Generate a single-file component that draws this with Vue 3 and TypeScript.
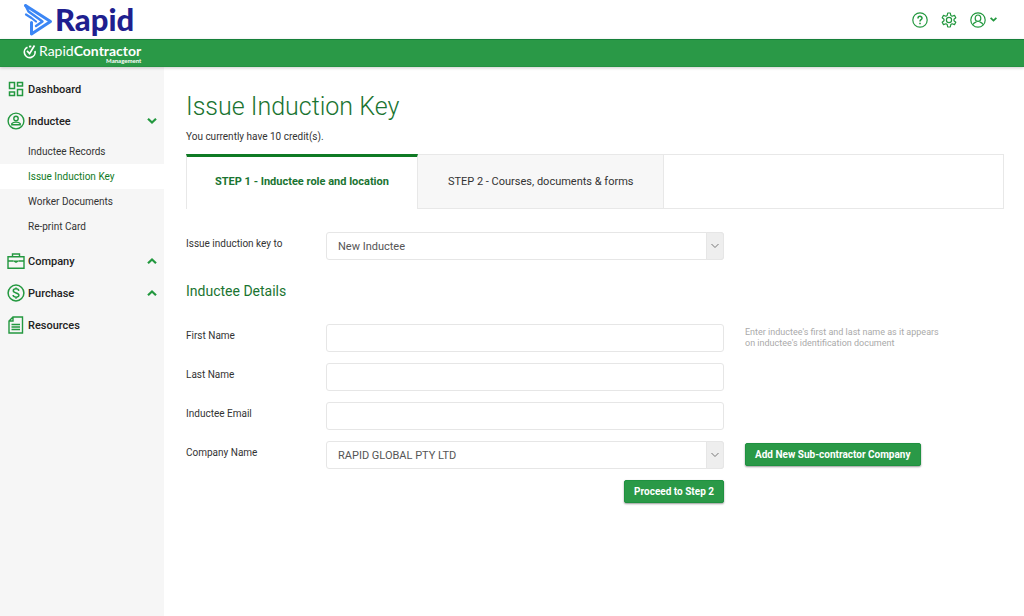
<script setup lang="ts">
import { ref } from 'vue'

interface NavItem {
  label: string
  icon: 'dashboard' | 'person' | 'briefcase' | 'dollar' | 'document'
  expandable?: boolean
  children?: string[]
}

const navItems: NavItem[] = [
  { label: 'Dashboard', icon: 'dashboard' },
  {
    label: 'Inductee',
    icon: 'person',
    expandable: true,
    children: ['Inductee Records', 'Issue Induction Key', 'Worker Documents', 'Re-print Card'],
  },
  { label: 'Company', icon: 'briefcase', expandable: true },
  { label: 'Purchase', icon: 'dollar', expandable: true },
  { label: 'Resources', icon: 'document' },
]
const activePage = 'Issue Induction Key'

const issueTo = ref('New Inductee')
const firstName = ref('')
const lastName = ref('')
const email = ref('')
const company = ref('RAPID GLOBAL PTY LTD')
</script>

<template>
  <div class="page">
    <header class="top">
      <a class="brand" href="#" aria-label="Rapid">
        <svg class="brand-mark" width="30" height="34" viewBox="0 0 30 34" fill="none" stroke="#3b86f5" stroke-width="3" stroke-linejoin="round" stroke-linecap="round">
          <path d="M2.500 2.500 27.500 18.500 8.500 31V19.500" />
          <path d="M2.500 2.500 5.500 8.500 19.500 18.500 13 23" stroke-width="2.400" />
          <path d="M3 11.500 8.500 15 13 18.500" stroke-width="2.200" />
        </svg>
        <span>Rapid</span>
      </a>
      <div class="tools">
        <button class="tool" type="button" aria-label="Help">
          <svg width="16" height="16" viewBox="0 0 16 16" fill="none" stroke="currentColor" stroke-width="1.200">
            <circle cx="8" cy="8" r="7.200" />
            <path d="M6 6.400C6 3.700 10 3.700 10 6.200 10 7.700 8 7.600 8 9.400" stroke-width="1.500" />
            <path d="M8 10.700v1.500" stroke-width="1.600" />
          </svg>
        </button>
        <button class="tool" type="button" aria-label="Settings">
          <svg width="16" height="16" viewBox="0 0 16 16" fill="none" stroke="currentColor" stroke-width="1.200" stroke-linejoin="round">
            <path d="M6.200 3.400 6.700 1h2.600l.5 2.400 1.300.8 2.400-.8 1.300 2.300L13 7.200v1.600l1.800 1.500-1.300 2.300-2.400-.8-1.300.8L9.300 15H6.700l-.5-2.400-1.300-.8-2.400.8-1.300-2.300L3 8.800V7.200L1.200 5.700l1.300-2.300 2.400.8z" />
            <circle cx="8" cy="8" r="2.600" />
          </svg>
        </button>
        <button class="tool account" type="button" aria-label="Account">
          <svg width="16" height="16" viewBox="0 0 16 16" fill="none" stroke="currentColor" stroke-width="1.200">
            <circle cx="8" cy="8" r="7.200" />
            <ellipse cx="8" cy="6.200" rx="2.800" ry="3.200" />
            <path d="M3 12.600C3.500 10.800 5 10.500 6.500 9.800M13 12.600c-.5-1.800-2-2.100-3.500-2.800" />
          </svg>
          <svg width="7" height="5" viewBox="0 0 7 5" fill="none" stroke="currentColor" stroke-width="1.800"><path d="M.6.800 3.500 3.600 6.400.8" /></svg>
        </button>
      </div>
    </header>

    <div class="product">
      <svg width="14" height="16" viewBox="0 0 14 16" fill="none" stroke="#fff" stroke-width="1.700">
        <path d="M4.500 2.200A5.400 5.400 0 1 0 12 6" />
        <path d="M4 5.800 6.600 8.600 11.500 .5" />
        <path d="M6 1.700 8.300 1.300" />
      </svg>
      <div class="product-name">
        <span>Rapid<b>Contractor</b></span>
        <small>Management</small>
      </div>
    </div>

    <div class="body">
      <nav class="side" aria-label="Main">
        <template v-for="item in navItems" :key="item.label">
          <a class="nav-item" href="#">
            <svg v-if="item.icon === 'dashboard'" width="18" height="18" viewBox="0 0 18 18" fill="none" stroke="currentColor" stroke-width="1.500">
              <path d="M2.500 2.500h5v6h-5zM10.500 2.500h5v3.500h-5zM2.500 12h5v3.500h-5zM10.500 9.500h5v6h-5z" />
            </svg>
            <svg v-else-if="item.icon === 'person'" width="18" height="18" viewBox="0 0 18 18" fill="none" stroke="currentColor" stroke-width="1.400">
              <circle cx="9" cy="9" r="7.900" />
              <circle cx="9" cy="6.500" r="2.200" />
              <path d="M4.800 12.800V11.600C6.300 9.600 11.700 9.600 13.200 11.600V12.800z" />
            </svg>
            <svg v-else-if="item.icon === 'briefcase'" width="18" height="18" viewBox="0 0 18 18" fill="none" stroke="currentColor" stroke-width="1.400">
              <path d="M1 4.800h16v11.500H1zM5.500 4.500V2h7v2.500M1 9h5.500M11.500 9H17" />
              <path d="M6.500 8.500h5v1L9 11 6.500 9.500z" fill="currentColor" stroke="none" />
            </svg>
            <svg v-else-if="item.icon === 'dollar'" width="18" height="18" viewBox="0 0 18 18" fill="none" stroke="currentColor" stroke-width="1.500">
              <circle cx="9" cy="9" r="7.900" />
              <path d="M11.800 6.800C11.500 4.200 6.300 4.200 6.300 6.800 6.300 9.500 11.900 8.400 11.900 11.200 11.900 13.900 6.200 13.700 6.100 11M9 3.500v1.600M9 13v1.700" />
            </svg>
            <svg v-else width="18" height="18" viewBox="0 0 18 18" fill="none" stroke="currentColor" stroke-width="1.400">
              <path d="M6 1h9.500v16H2V5zM6 1v4H2M4.500 8.500h8.500M4.500 11h8.500M4.500 13.500h8.500" />
            </svg>
            <span>{{ item.label }}</span>
            <svg v-if="item.expandable" class="caret" width="10" height="8" viewBox="0 0 10 8" fill="none" stroke="currentColor" stroke-width="2.200">
              <path :d="item.children ? 'M1 1.800 5 5.600 9 1.800' : 'M1 6.200 5 2.400 9 6.200'" />
            </svg>
          </a>
          <ul v-if="item.children" class="sub">
            <li v-for="child in item.children" :key="child">
              <a href="#" :class="{ active: child === activePage }">{{ child }}</a>
            </li>
          </ul>
        </template>
      </nav>

      <main class="main">
        <h1>Issue Induction Key</h1>
        <p class="credits">You currently have 10 credit(s).</p>

        <div class="tabs" role="tablist">
          <button class="tab current" type="button" role="tab" aria-selected="true">STEP 1 - Inductee role and location</button>
          <button class="tab" type="button" role="tab" aria-selected="false">STEP 2 - Courses, documents &amp; forms</button>
          <div class="tab-rest"></div>
        </div>

        <form @submit.prevent>
          <div class="row">
            <label for="issue-to">Issue induction key to</label>
            <div class="select">
              <select id="issue-to" v-model="issueTo"><option>New Inductee</option></select>
              <span class="arrow"><svg width="8" height="6" viewBox="0 0 8 6" fill="none" stroke="#777"><path d="M.5 1 4 4.500 7.500 1" /></svg></span>
            </div>
          </div>

          <h2>Inductee Details</h2>

          <div class="row">
            <label for="first">First Name</label>
            <input id="first" v-model="firstName" type="text" aria-describedby="name-help" />
            <p id="name-help" class="help">Enter inductee's first and last name as it appears on inductee's identification document</p>
          </div>
          <div class="row">
            <label for="last">Last Name</label>
            <input id="last" v-model="lastName" type="text" />
          </div>
          <div class="row">
            <label for="email">Inductee Email</label>
            <input id="email" v-model="email" type="email" />
          </div>
          <div class="row">
            <label for="company">Company Name</label>
            <div class="select">
              <select id="company" v-model="company"><option>RAPID GLOBAL PTY LTD</option></select>
              <span class="arrow"><svg width="8" height="6" viewBox="0 0 8 6" fill="none" stroke="#777"><path d="M.5 1 4 4.500 7.500 1" /></svg></span>
            </div>
            <button class="btn add" type="button">Add New Sub-contractor Company</button>
          </div>
          <div class="row">
            <button class="btn proceed" type="submit">Proceed to Step 2</button>
          </div>
        </form>
      </main>
    </div>
  </div>
</template>

<style>
body {
  margin: 0;
  background: #fff;
}
</style>

<style scoped>
.page {
  display: flex;
  flex-direction: column;
  min-height: 100vh;
  font-family: Roboto, "Liberation Sans", sans-serif;
  color: #333;
}
.page * {
  box-sizing: border-box;
}
a {
  color: inherit;
  text-decoration: none;
}
button,
input,
select {
  font-family: inherit;
}
svg {
  flex: none;
}
.top {
  display: flex;
  align-items: center;
  justify-content: space-between;
  height: 39px;
  padding: 0 27px 0 23px;
}
.brand {
  display: flex;
  align-items: center;
  gap: 2px;
  height: 39px;
  color: #1f1f8f;
  font-family: Lato, sans-serif;
  font-size: 31px;
  font-weight: 900;
  line-height: 39px;
}
.tools {
  display: flex;
  gap: 13px;
}
.tool {
  display: flex;
  align-items: center;
  gap: 4px;
  padding: 0;
  border: 0;
  background: none;
  color: #23983f;
}
.product {
  display: flex;
  align-items: center;
  gap: 2px;
  height: 28px;
  padding: 0 23px;
  background: #2a9947;
  border-top: 1px solid #16803a;
  border-bottom: 1px solid #259142;
  box-shadow: 0 1px 3px rgba(0, 0, 0, 0.2);
  color: #fff;
  font-family: Lato, sans-serif;
  z-index: 1;
}
.product-name {
  display: flex;
  flex-direction: column;
  font-size: 14px;
  line-height: 15px;
}
.product-name small {
  align-self: flex-end;
  font-size: 6px;
  font-weight: 700;
  line-height: 6px;
}
.body {
  display: flex;
  flex: 1;
}
.side {
  flex: none;
  width: 164px;
  padding-top: 6px;
  background: #f6f6f6;
}
.nav-item {
  display: flex;
  align-items: center;
  gap: 3px;
  height: 32px;
  padding: 0 7px;
  color: #23983f;
  font-size: 11px;
  font-weight: 500;
}
.nav-item span {
  color: #222;
}
.caret {
  margin-left: auto;
}
.sub {
  margin: 2px 0 6px;
  padding: 0;
  list-style: none;
}
.sub a {
  display: block;
  padding-left: 28px;
  font-size: 10px;
  line-height: 25px;
}
.sub .active {
  background: #fff;
  color: #0f7a24;
}
.main {
  flex: 1;
  min-width: 0;
  padding: 24px 20px 20px 22px;
}
h1 {
  margin: 0;
  color: #1a7431;
  font-size: 25px;
  font-weight: 300;
  line-height: 32px;
}
.credits {
  margin: 7px 0 10px;
  font-size: 10px;
  line-height: 14px;
}
.tabs {
  display: flex;
  height: 55px;
}
.tab {
  padding: 0 30px 1px;
  border: 1px solid #e8e8e8;
  border-left: 0;
  background: #f7f7f7;
  color: #333;
  font-size: 11px;
}
.current {
  padding: 0 28px 4px;
  border-top: 3px solid #0f7a24;
  border-left: 1px solid #e8e8e8;
  border-bottom: 0;
  background: #fff;
  color: #1a7431;
  font-weight: 700;
}
.tab-rest {
  flex: 1;
  border: 1px solid #e8e8e8;
  border-left: 0;
}
form {
  display: flex;
  flex-direction: column;
  gap: 11px;
  padding-top: 23px;
}
.row {
  display: grid;
  grid-template-columns: 140px minmax(0, 398px) minmax(0, 1fr);
  align-items: start;
}
label {
  padding-top: 5px;
  font-size: 10px;
  line-height: 14px;
}
input,
select {
  width: 100%;
  height: 28px;
  border: 1px solid #e6e6e6;
  border-radius: 3px;
  padding: 0 11px;
  background: #fff;
  color: #555;
  font-size: 11px;
}
select {
  appearance: none;
}
.select {
  position: relative;
}
.arrow {
  position: absolute;
  top: 0;
  right: 0;
  bottom: 0;
  display: flex;
  align-items: center;
  justify-content: center;
  width: 18px;
  border: 1px solid #e6e6e6;
  border-radius: 0 3px 3px 0;
  background: #eee;
  pointer-events: none;
}
h2 {
  margin: 11px 0 13px;
  color: #1a7431;
  font-size: 14px;
  font-weight: 400;
  line-height: 18px;
}
.help {
  max-width: 216px;
  margin: 3px 0 0;
  padding-left: 21px;
  color: #aaa;
  font-size: 9px;
  line-height: 11px;
}
.btn {
  height: 23px;
  padding: 0 9px;
  border: 1px solid #1f9140;
  border-radius: 2px;
  background: #2a9947;
  box-shadow: 0 1px 2px rgba(0, 0, 0, 0.4);
  color: #fff;
  font-size: 10px;
  font-weight: 700;
  line-height: 20px;
}
.add {
  justify-self: start;
  margin: 2px 0 0 21px;
}
.proceed {
  grid-column: 2;
  justify-self: end;
}
</style>
